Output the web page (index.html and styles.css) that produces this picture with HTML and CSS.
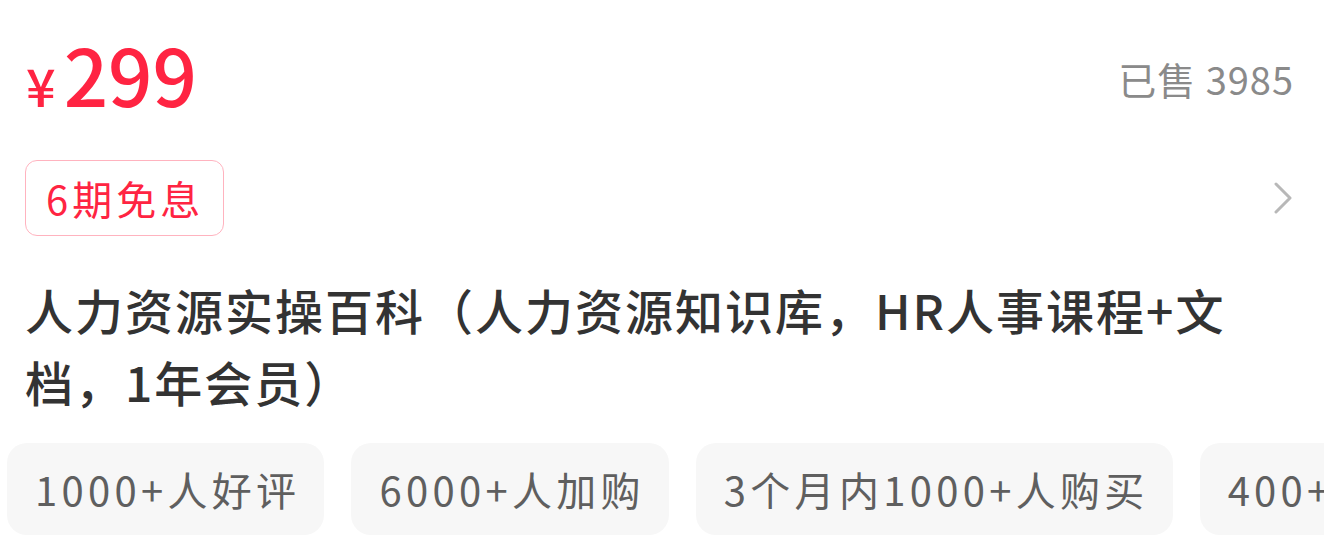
FILE: index.html
```html
<!DOCTYPE html>
<html lang="zh-CN">
<head>
<meta charset="utf-8">
<title>商品信息</title>
<link rel="stylesheet" href="styles.css">
</head>
<body>
<div class="card">
  <div class="main">
    <div class="price-row">
      <div class="price"><span class="yen">¥</span><span class="amount">299</span></div>
      <div class="sold">已售 3985</div>
    </div>
    <div class="promo-row">
      <span class="promo">6期免息</span>
      <svg class="chevron" width="20" height="32" viewBox="0 0 20 32" aria-hidden="true">
        <path d="M3 2 L17 16 L3 30" fill="none" stroke="#b8b8b8" stroke-width="3" stroke-linecap="round" stroke-linejoin="round"/>
      </svg>
    </div>
    <h1 class="title">人力资源实操百科（人力资源知识库，HR人事课程+文档，1年会员）</h1>
  </div>
  <div class="tags">
    <span class="tag">1000+人好评</span>
    <span class="tag">6000+人加购</span>
    <span class="tag">3个月内1000+人购买</span>
    <span class="tag">400+人收藏</span>
  </div>
</div>
</body>
</html>
```

FILE: styles.css
```css
html, body {
  margin: 0;
  padding: 0;
  background: #ffffff;
}

body {
  font-family: "Noto Sans CJK SC", "Noto Sans", sans-serif;
  width: 1324px;
  height: 538px;
  overflow: hidden;
}

.card {
  display: flex;
  flex-direction: column;
}

.main {
  padding: 0 31px 0 25px;
}

.price-row {
  display: flex;
  justify-content: space-between;
  align-items: center;
  margin-top: 41px;
  height: 76px;
}

.price {
  color: #ff2442;
  display: flex;
  align-items: baseline;
  line-height: 76px;
}

.yen {
  font-size: 52px;
  font-weight: 500;
  margin-right: 8px;
  margin-left: 1px;
}

.amount {
  font-size: 78px;
  font-weight: 500;
}

.sold {
  color: #8a8a8a;
  font-size: 38px;
  line-height: 38px;
  letter-spacing: 1px;
  margin-right: -1px;
}

.promo-row {
  display: flex;
  justify-content: space-between;
  align-items: center;
  margin-top: 43px;
}

.promo {
  color: #ff2442;
  font-size: 40px;
  line-height: 40px;
  letter-spacing: 4px;
  padding: 17px 19px 17px 20px;
  border: 1.5px solid #ffb3bf;
  border-radius: 12px;
}

.chevron {
  display: block;
}

.title {
  margin: 37px 48px 0 0;
  font-size: 48px;
  line-height: 72px;
  font-weight: 500;
  color: #333333;
  letter-spacing: 2px;
}

.tags {
  display: flex;
  gap: 27px;
  margin-top: 26px;
  padding-left: 7px;
  overflow: hidden;
  white-space: nowrap;
}

.tag {
  flex: none;
  background: #f7f7f7;
  color: #5f5f5f;
  font-size: 40px;
  line-height: 40px;
  letter-spacing: 4.3px;
  padding: 26px 24px 26px 28px;
  border-radius: 20px;
}
```
